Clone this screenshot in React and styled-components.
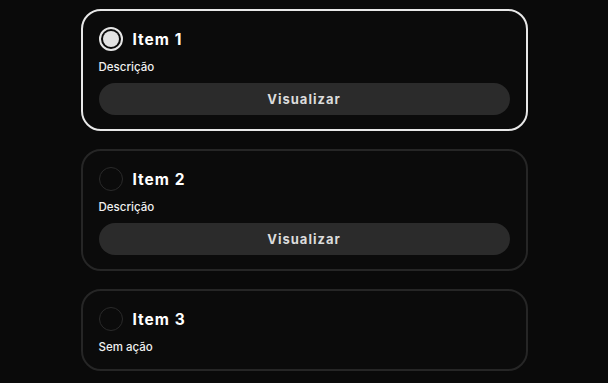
import React, { useState } from "react";
import styled, { createGlobalStyle } from "styled-components";

const GlobalStyle = createGlobalStyle`
  html, body {
    margin: 0;
    padding: 0;
    background: #0a0a0a;
  }
  body {
    font-family: Inter, "Noto Sans", sans-serif;
    color: #f2f2f2;
  }
`;

const items = [
  { id: 1, title: "Item 1", description: "Descrição", action: "Visualizar" },
  { id: 2, title: "Item 2", description: "Descrição", action: "Visualizar" },
  { id: 3, title: "Item 3", description: "Sem ação" },
];

export default function App() {
  const [selected, setSelected] = useState(1);

  return (
    <>
      <GlobalStyle />
      <Container>
        {items.map((item) => (
          <Card
            key={item.id}
            $active={selected === item.id}
            onClick={() => setSelected(item.id)}
          >
            <Header>
              <Radio $active={selected === item.id}>
                {selected === item.id && <Dot />}
              </Radio>
              <Title>{item.title}</Title>
            </Header>
            <Description>{item.description}</Description>
            {item.action && <Button>{item.action}</Button>}
          </Card>
        ))}
      </Container>
    </>
  );
}

const Container = styled.div`
  display: flex;
  flex-direction: column;
  align-items: center;
  gap: 18px;
  padding-top: 9px;
`;

const Card = styled.div`
  box-sizing: border-box;
  width: 447px;
  display: flex;
  flex-direction: column;
  padding: 16px 16px 14px 16px;
  border-radius: 20px;
  border: 2px solid ${({ $active }) => ($active ? "#e8e8e8" : "#262626")};
  background: #0b0b0b;
  cursor: pointer;
`;

const Header = styled.div`
  display: flex;
  align-items: center;
  gap: 10px;
  height: 24px;
  margin-bottom: 8px;
`;

const Radio = styled.div`
  box-sizing: border-box;
  width: 24px;
  height: 24px;
  border-radius: 50%;
  border: ${({ $active }) => ($active ? "2px solid #e6e6e6" : "1.5px solid #2a2a2a")};
  display: flex;
  align-items: center;
  justify-content: center;
`;

const Dot = styled.div`
  width: 16px;
  height: 16px;
  border-radius: 50%;
  background: #e2e2e2;
`;

const Title = styled.div`
  font-size: 15.5px;
  font-weight: 700;
  letter-spacing: 1px;
  color: #ffffff;
`;

const Description = styled.div`
  font-size: 11.5px;
  font-weight: 500;
  line-height: 16px;
  color: #f0f0f0;
`;

const Button = styled.button`
  height: 32px;
  margin-top: 8px;
  border: none;
  border-radius: 16px;
  background: #2b2b2b;
  color: #dcdcdc;
  font-family: Inter, "Noto Sans", sans-serif;
  font-size: 13px;
  font-weight: 700;
  letter-spacing: 1px;
  cursor: pointer;
`;
